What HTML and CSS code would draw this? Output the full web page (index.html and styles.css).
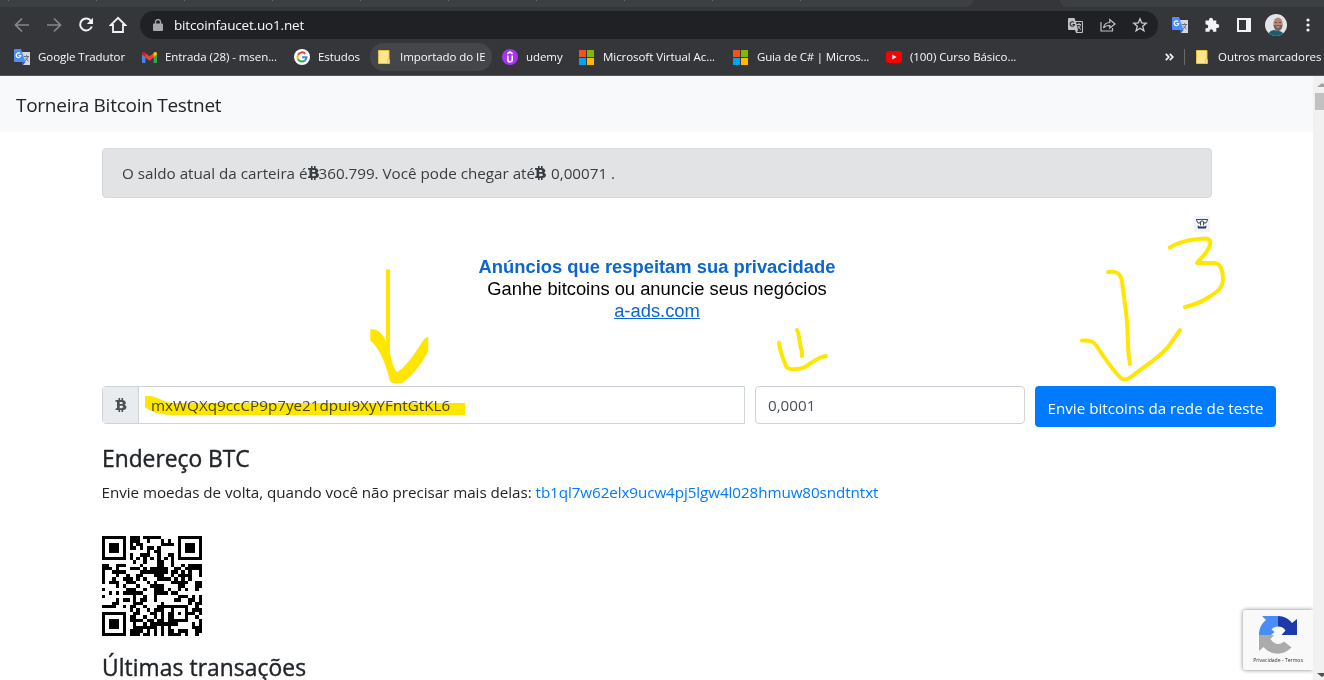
FILE: index.html
```html
<!DOCTYPE html>
<html lang="pt-BR">
<head>
<meta charset="utf-8">
<title>Torneira Bitcoin Testnet</title>
<link rel="stylesheet" href="styles.css">
</head>
<body>
<svg class="defs" width="0" height="0">
  <symbol id="btc" viewBox="0 0 11 14">
    <path fill="currentColor" fill-rule="evenodd" d="M0 2h3V0h1.6v2h1.4V0h1.6v2.2C9.400 2.500 10.300 3.500 10.300 4.800c0 .9-.5 1.600-1.400 2 1.300.4 2 1.200 2 2.400 0 1.600-1.200 2.600-3.300 2.800v2H6v-2H4.600v2H3v-2H0l.3-1.700h1.200V3.700H0zM4.200 3.900v2.200h1.500c1 0 1.600-.4 1.600-1.100s-.6-1.100-1.600-1.100zM4.200 7.800v2.400h1.800c1.100 0 1.800-.4 1.800-1.200s-.7-1.200-1.800-1.200z"/>
  </symbol>
  <symbol id="translate" viewBox="0 0 16 16">
    <path fill="#d5d8dc" d="M7 3h9v13H9z"/>
    <path fill="#4f8df5" d="M1 0h6l4.500 13H1a1 1 0 0 1-1-1V1a1 1 0 0 1 1-1z"/>
    <path fill="#2563c9" d="M7.500 13h4L9 16z"/>
    <path fill="none" stroke="#fff" stroke-width="1.200" d="M6.200 4.700a2.300 2.300 0 1 0 .6 1.800H4.600"/>
    <path fill="none" stroke="#697078" d="M10 7.500h5M12.500 6.200v1.300M14 7.500c-.4 2-1.700 3.500-3 4.300M11.500 8.800c.6 1.400 1.600 2.400 3 3.200"/>
  </symbol>
  <symbol id="folder" viewBox="0 0 14 14">
    <path fill="#ffe691" stroke="#e9c13d" d="M.5.500h10.500v13H.5z"/><path fill="#ffe691" stroke="#e9c13d" stroke-width=".8" d="M9.500 9.500h2v4H9.500z"/>
  </symbol>
  <symbol id="windows" viewBox="0 0 15 15">
    <path fill="#f4511e" d="M0 0h7v7H0z"/><path fill="#7fba00" d="M8 0h7v7H8z"/><path fill="#00a4ef" d="M0 8h7v7H0z"/><path fill="#ffb900" d="M8 8h7v7H8z"/>
  </symbol>
</svg>

<header class="browser">
  <div class="tabstrip"><div class="tabs-left"><i></i><i></i><i></i><i></i><i></i><i></i><i></i><i></i><i></i><i></i></div><div class="tabs-right"></div></div>
  <div class="toolbar">
    <svg class="nav-icon" width="16" height="16" viewBox="0 0 16 16" fill="none" stroke="#85878a" stroke-width="1.700"><path d="M15 8H2M8 1.500L1.500 8 8 14.500"/></svg>
    <svg class="nav-icon" width="16" height="16" viewBox="0 0 16 16" fill="none" stroke="#85878a" stroke-width="1.700"><path d="M1 8h13M8 1.500L14.500 8 8 14.500"/></svg>
    <svg class="nav-icon" width="16" height="16" viewBox="0 0 16 16" fill="none" stroke="#f1f3f4" stroke-width="2"><path d="M13 4A6 6 0 1 0 13.800 9.500"/><path fill="#f1f3f4" stroke="none" d="M15 .8V7H8.800z"/></svg>
    <svg class="nav-icon" width="18" height="18" viewBox="0 0 18 18" fill="none" stroke="#f1f3f4" stroke-width="1.800"><path d="M9 1.800L1.800 9H4v7h10V9h2.200z"/></svg>
    <div class="omnibox">
      <svg width="10" height="13" viewBox="0 0 10 13"><path fill="#a4a9ae" d="M1 4.500h8a1 1 0 0 1 1 1V11a1 1 0 0 1-1 1H1a1 1 0 0 1-1-1V5.500a1 1 0 0 1 1-1z"/><path fill="none" stroke="#a4a9ae" stroke-width="1.300" d="M2.500 5V3a2.500 2.500 0 0 1 5 0v2"/></svg>
      <span class="url">bitcoinfaucet.uo1.net</span>
      <span class="omni-actions">
        <svg width="15" height="15" viewBox="0 0 15 15"><path fill="#bfc2c5" d="M1 0h5.500l1 3H14a1 1 0 0 1 1 1v10a1 1 0 0 1-1 1H8l-1-3H1a1 1 0 0 1-1-1V1a1 1 0 0 1 1-1z"/><path fill="#292b2e" d="M8 4h6v10H9l1-2z"/><path fill="none" stroke="#292b2e" stroke-width="1.100" d="M6 4.500A2.200 2.200 0 1 0 6.500 6.500H4.500"/><path fill="none" stroke="#bfc2c5" d="M8.500 6.500H13M11 5v1.500M12.500 6.500c-.3 2-1.500 3-2.500 4M10 8c.5 1.500 1.500 2.500 3 3.500"/></svg>
        <svg width="16" height="14" viewBox="0 0 16 14" fill="none" stroke="#bfc2c5" stroke-width="1.200"><path d="M1 4v9h11.500v-3"/><path d="M3.500 10C4 6.500 6 4.600 9.800 4.500V1.500L15 6l-5.200 4V7.500C7 7.400 5 8 3.500 10z"/></svg>
        <svg width="16" height="16" viewBox="0 0 16 16" fill="none" stroke="#c9cccf" stroke-width="1.300"><path d="M8 1.800l1.700 4.200 4.500.3-3.500 2.900 1.200 4.500L8 11.200l-3.900 2.500 1.200-4.500-3.500-2.900 4.500-.3z"/></svg>
      </span>
    </div>
    <div class="extensions">
      <svg width="16" height="16"><use href="#translate"/></svg>
      <svg width="16" height="16" viewBox="0 0 16 16"><path fill="#f1f3f4" d="M1.500 3.500H5V2.700a2 2 0 0 1 4 0v.8h3.300v3.600h1a2 2 0 0 1 0 4h-1v3.700H9V14a1.700 1.700 0 0 0-3.500 0v.8H1.500v-3.500h.8a1.900 1.900 0 0 0 0-3.800h-.8z"/></svg>
      <svg width="14" height="14" viewBox="0 0 14 14"><path fill="#f1f3f4" fill-rule="evenodd" d="M0 0h14v14H0zM2 2v10h7V2z"/></svg>
      <svg width="22" height="22" viewBox="0 0 22 22"><clipPath id="av"><circle cx="11" cy="11" r="11"/></clipPath><g clip-path="url(#av)"><path fill="#e3e4e6" d="M0 0h22v22H0z"/><path fill="#17606d" d="M3 22c0-4 3-5.500 6-6l5 1c3 .5 4.500 2 5 5z"/><ellipse cx="13" cy="9.500" rx="4.600" ry="6" fill="#b98473"/><path fill="#71605c" d="M8.500 10.500c1 1.200 2 .8 4.500.6 2 .2 3 .6 4.500-.6 0 4-2 6.500-4.500 6.500s-4.500-3-4.500-6.500z"/><path stroke="#6a4941" d="M10 8.500h2M14 8.500h2"/><path stroke="#d9b9af" d="M11.500 13h3"/></g></svg>
      <svg width="4" height="14" viewBox="0 0 4 14" fill="#f1f3f4"><circle cx="2" cy="2" r="1.600"/><circle cx="2" cy="7" r="1.600"/><circle cx="2" cy="12" r="1.600"/></svg>
    </div>
  </div>
  <div class="bookmarks">
    <span class="bm"><svg width="16" height="16"><use href="#translate"/></svg><b class="t1">Google Tradutor</b></span>
    <span class="bm"><svg width="15" height="11" viewBox="0 0 15 11"><path fill="#4285f4" d="M0 1.500L3.400 4v7H1a1 1 0 0 1-1-1z"/><path fill="#34a853" d="M15 1.500L11.600 4v7H14a1 1 0 0 0 1-1z"/><path fill="#ea4335" d="M2.500.500l5 3.800 5-3.800v4.500l-5 3.700-5-3.700z"/><path fill="#c5221f" d="M0 1.700C0 0 1.800-.5 3.400.800V5L0 2.600z"/><path fill="#fbbc04" d="M15 1.700C15 0 13.200-.5 11.600.800V5L15 2.600z"/></svg><b class="t2">Entrada (28) - msen...</b></span>
    <span class="bm"><svg width="16" height="16" viewBox="0 0 16 16" fill="none" stroke-width="2"><circle cx="8" cy="8" r="8" fill="#fff"/><path stroke="#ea4335" d="M4 5.800A4.500 4.500 0 0 1 11.300 4.800"/><path stroke="#fbbc05" d="M4.100 5.700a4.600 4.600 0 0 0 0 4.600"/><path stroke="#34a853" d="M4 10.200a4.500 4.500 0 0 0 6.800 1.300"/><path stroke="#4285f4" d="M10.700 11.600A4.500 4.500 0 0 0 12.500 8.200H8"/></svg><b class="t3">Estudos</b></span>
    <span class="bm pill"><svg width="14" height="14"><use href="#folder"/></svg><b class="t4">Importado do IE</b></span>
    <span class="bm"><svg width="16" height="16" viewBox="0 0 16 16"><circle cx="8" cy="8" r="8" fill="#a435f0"/><path fill="none" stroke="#fff" stroke-width="1.600" d="M5.800 6.500v4.200c0 2.800 4.400 2.800 4.400 0V6.500M5.300 4.800L8 3l2.700 1.800"/></svg><b class="t5">udemy</b></span>
    <span class="bm"><svg width="15" height="15"><use href="#windows"/></svg><b class="t6">Microsoft Virtual Ac...</b></span>
    <span class="bm"><svg width="15" height="15"><use href="#windows"/></svg><b class="t7">Guia de C# | Micros...</b></span>
    <span class="bm"><svg width="16" height="12" viewBox="0 0 16 12"><rect width="16" height="12" rx="3" fill="#f00"/><path fill="#fff" d="M6.300 3.500v5L10.500 6z"/></svg><b class="t8">(100) Curso Básico...</b></span>
    <svg class="more" width="9" height="8" viewBox="0 0 9 8" fill="none" stroke="#f1f3f4" stroke-width="1.700"><path d="M.8.800L3.800 4 .8 7.200M4.800.800L7.800 4 4.800 7.200"/></svg>
    <i class="sep"></i>
    <span class="bm"><svg width="14" height="14"><use href="#folder"/></svg><b class="t9">Outros marcadores</b></span>
  </div>
</header>

<div class="viewport">
  <main class="page">
    <nav class="navbar"><span class="brand">Torneira Bitcoin Testnet</span></nav>
    <div class="content">
      <div class="alert"><span class="a1">O saldo atual da carteira é</span><svg class="btc" width="11" height="14"><use href="#btc"/></svg><span class="a2">360.799. Você pode chegar até</span><svg class="btc" width="11" height="14"><use href="#btc"/></svg><span class="a3">0,00071 .</span></div>
      <section class="ad">
        <svg class="ad-mark" width="16" height="16" viewBox="0 0 16 16"><path fill="#f0f3f6" d="M0 0h16v16H0z"/><path fill="none" stroke="#2d3b49" stroke-width=".9" d="M2 3.500h12M2.500 4l1.500 3h2l1-2h2l1 2h2l1.500-3M6.500 6v3.500M9.500 6v3.500"/><path fill="#2d3b49" d="M3.500 9.500l2 1h5l2-1-.5 3H4z"/></svg>
        <p class="ad-title">Anúncios que respeitam sua privacidade</p>
        <p class="ad-text">Ganhe bitcoins ou anuncie seus negócios</p>
        <a class="ad-link">a-ads.com</a>
      </section>
      <form class="send">
        <div class="address"><span class="addon"><svg width="12" height="14"><use href="#btc"/></svg></span><span class="field"><span class="f1">mxWQXq9ccCP9p7ye21dpui9XyYFntGtKL6</span></span></div>
        <div class="amount"><span class="f2">0,0001</span></div>
        <div class="submit"><span class="f3">Envie bitcoins da rede de teste</span></div>
      </form>
      <h4 class="h-btc"><span class="h1">Endereço BTC</span></h4>
      <p class="back"><span class="p1">Envie moedas de volta, quando você não precisar mais delas:</span> <a class="p2">tb1ql7w62elx9ucw4pj5lgw4l028hmuw80sndtntxt</a></p>
      <svg id="qr" class="qr" width="100" height="100" viewBox="0 0 29 29" shape-rendering="crispEdges"></svg>
      <h4 class="h-tx"><span class="h2">Últimas transações</span></h4>
    </div>
    <aside class="captcha">
      <svg width="38" height="38" viewBox="0 0 38 38"><path fill="#4b8df8" d="M0 19C0 12 3 7 7 4L3 0h16v10.500c-3 0-5 1-6.500 3l3 2.500-3.500 3z"/><path fill="#1c3aa9" d="M19 0c6 0 11 3 14 7l5-4v16H22.500l4-4.500c-1.500-2.500-4-4-7.500-4z"/><path fill="#ababab" d="M0 19h15l-3.500 4c4 6.500 10 6 13.500 2.500l7.500 6C23 41 11 38.500 4.500 31L0 35z"/></svg>
      <span>Privacidade - Termos</span>
    </aside>
  </main>
  <div class="scrollbar"><i class="up"></i><i class="thumb"></i><i class="down"></i></div>
</div>

<svg class="ink" width="1324" height="680" viewBox="0 0 1324 680" fill="none" stroke="#ffe600" stroke-width="4" stroke-linecap="round" stroke-linejoin="round">
  <path stroke-linecap="butt" d="M388 269.500V354"/>
  <path fill="#ffe600" stroke="none" d="M370.300 329.500C378 328 384 335 386.500 343C391 352 392 368 397 372C404 369 415 354 424 339L428.300 336.500V351C420 367 410 378 402 383C397 384 392 384 390 381C387 367 379 346 370.300 341z"/>
  <path fill="#ffe600" stroke="none" d="M145 396.500C155 394 162 402 172 403H465V415H172C158 415 150 411 145 407z"/>
  <path d="M779 342.500C780 353 784 360 786.500 367C789 370 799 370 805 367C812 363 817 357 826 356"/>
  <path d="M797 330C799.500 334 799 341 801 348C802 351 802 353 802 356"/>
  <path d="M1108 272C1117 271 1120 273 1122 281C1124 299 1127 315 1127.500 329C1128 341 1127.500 351 1130 364"/>
  <path d="M1082 340.500C1090 340 1093 340.500 1098 348C1104 357 1113 371 1121 378C1124 380.500 1127 380 1131 377C1143 367 1158 359 1168 347C1172 342 1177 334 1180 330"/>
  <path d="M1170 247.500C1181 240 1195 239 1206 238.500C1213 239 1210 247 1207 251C1204 256 1200 259 1197 263H1214C1221 263 1223 272 1223 279C1223 288 1217 292 1209 297C1200 303 1194 305 1185 307"/>
</svg>
<script src="qr.js"></script>
</body>
</html>
```

FILE: styles.css
```css
* { box-sizing: border-box; }
body { margin: 0; width: 1324px; height: 680px; overflow: hidden; position: relative; background: #fff; color: #212529; font-family: "Open Sans", "Noto Sans", sans-serif; font-size: 15.200px; }
p, h4 { margin: 0; }
i { display: block; }
svg { flex: none; display: block; }
.defs { position: absolute; }
span[class], b[class] { white-space: nowrap; }

.browser { height: 76px; background: #35363a; border-bottom: 1px solid #55565a; }
.tabstrip { height: 7px; display: flex; justify-content: space-between; }
.tabs-left { width: 973px; background: #3c4043; border-bottom-right-radius: 7px; display: flex; gap: 87px; padding-left: 8px; }
.tabs-left i { width: 1px; height: 1px; background: #6a6d70; }
.tabs-right { width: 264px; background: #3c4043; border-bottom-left-radius: 7px; }
.toolbar { height: 36px; display: flex; align-items: center; padding-left: 14px; }
.nav-icon { margin-right: 16px; }
.nav-icon:nth-child(4) { margin: 0 13px 0 -1px; }
.omnibox { width: 1018px; height: 28px; border-radius: 14px; background: #202124; display: flex; align-items: center; padding: 0 10px 0 13px; }
.url { margin-left: 11px; color: #f8f9fa; font-size: 13.500px; letter-spacing: -.18px; }
.omni-actions { margin-left: auto; display: flex; align-items: center; gap: 16.500px; }
.extensions { display: flex; align-items: center; margin-left: 14px; gap: 16px; }
.extensions svg:nth-child(3) { margin-left: 1px; }
.extensions svg:nth-child(4) { margin-left: -2px; }
.extensions svg:nth-child(5) { margin-left: 3px; }
.bookmarks { height: 28px; padding-left: 14px; display: grid; grid-template-columns: 128px 152px 76px 132px 77px 154px 153px 279px 19px 12px 127px; align-items: center; }
.bm { display: flex; align-items: center; gap: 8px; height: 28px; color: #f8f9fa; }
.bm:nth-child(6), .bm:nth-child(7) { gap: 9px; }
.bm b { font-weight: 400; font-size: 11.500px; margin-top: -1px; letter-spacing: -.06px; }
.bm .t7 { letter-spacing: -.18px; }
.pill { width: 122px; border-radius: 14px; background: #45464a; padding-left: 8px; }
.sep { width: 1px; height: 16px; background: #6a6c70; }

.viewport { display: flex; height: 604px; }
.page { width: 1313px; position: relative; }
.scrollbar { width: 11px; background: #f1f1f1; display: flex; flex-direction: column; overflow: hidden; }
.scrollbar .up { border: 5px solid transparent; border-top: 0; border-bottom: 4px solid #a3a3a3; margin: 7px 0 6px 4px; width: 10px; }
.scrollbar .thumb { height: 17px; margin-left: 2px; background: #c1c1c1; }
.scrollbar .down { border: 5px solid transparent; border-bottom: 0; border-top: 4px solid #505050; margin: auto 0 3px 4px; width: 10px; }

.navbar { height: 56px; background: #f8f9fa; padding: 2px 0 0 16px; display: flex; align-items: center; }
.brand { font-size: 19px; letter-spacing: -.27px; }
.content { padding: 16px 0 0 102px; }
.alert { width: 1110px; height: 50px; border: 1px solid #d6d8db; border-radius: 4px; background: #e2e3e5; color: #383d41; display: flex; align-items: center; padding-left: 19px; }
.a3 { margin-left: 5px; }
.ad { width: 1110px; height: 172px; margin-top: 16px; display: flex; flex-direction: column; align-items: center; font-family: "Liberation Sans", Arial, sans-serif; font-size: 18.350px; line-height: 22px; color: #000; }
.ad-mark { align-self: flex-end; margin: 2px 2px 24px 0; }
.ad-title { color: #0b66cf; font-weight: 700; }
.ad-link { color: #0b66cf; text-decoration: underline; }
.send { display: flex; gap: 10px; align-items: flex-start; }
.address { width: 643px; height: 38px; border: 1px solid #ced4da; border-radius: 4px 0 0 4px; display: flex; }
.addon { width: 36px; background: #e9ecef; border-right: 1px solid #ced4da; display: flex; align-items: center; justify-content: center; color: #495057; }
.field { display: flex; align-items: center; padding-left: 12px; color: #495057; }
.f1 { letter-spacing: .03px; }
.amount { width: 270px; height: 38px; border: 1px solid #ced4da; border-radius: 4px; padding-left: 12px; display: flex; align-items: center; color: #495057; }
.submit { width: 241px; height: 41px; border-radius: 4px; background: #007bff; color: #fff; display: flex; align-items: center; justify-content: center; padding-top: 3px; }
.h-btc, .h-tx { font-size: 22.800px; font-weight: 400; line-height: 29px; -webkit-text-stroke: .4px currentColor; }
.h-btc { margin-top: 17px; }
.back { line-height: 24px; margin: 7px 0 0 -.5px; white-space: nowrap; letter-spacing: -.035px; }
.p2 { color: #007bff; letter-spacing: -.07px; }
.qr { margin-top: 32px; }
.h-tx { margin-top: 17px; letter-spacing: .08px; }
.captcha { position: absolute; right: 0; top: 534px; width: 70px; height: 60px; border-radius: 3px 0 0 3px; background: #f9f9f9; box-shadow: 0 0 4px #808080; clip-path: inset(-6px 0 -6px -6px); display: flex; flex-direction: column; align-items: center; padding-top: 6px; }
.captcha span { font-size: 5.100px; line-height: 8px; margin-top: 2px; color: #333; white-space: nowrap; }
.ink { position: absolute; left: 0; top: 0; mix-blend-mode: multiply; }
```

FILE: qr.js
```js
// QR encoder, version 3 (29x29), byte mode, single error-correction block.
function buildQR(text, level, mask) {
  const N = 29, total = 70, dataLen = level === "L" ? 55 : 44, ecLen = total - dataLen;
  let bits = "0100" + text.length.toString(2).padStart(8, "0");
  for (const c of text) bits += c.charCodeAt(0).toString(2).padStart(8, "0");
  bits += "0000".slice(0, dataLen * 8 - bits.length);
  while (bits.length % 8) bits += "0";
  const data = bits.match(/.{8}/g).map(b => parseInt(b, 2));
  for (let i = 0; data.length < dataLen; i++) data.push(i % 2 ? 17 : 236);

  const mul = (a, b) => { let r = 0; for (; b; b >>= 1) { if (b & 1) r ^= a; a = a & 128 ? (a << 1) ^ 285 : a << 1; } return r; };
  let gen = [1], root = 1;
  for (let i = 0; i < ecLen; i++) {
    const next = new Array(gen.length + 1).fill(0);
    gen.forEach((g, j) => { next[j] ^= g; next[j + 1] ^= mul(g, root); });
    gen = next; root = mul(root, 2);
  }
  const rem = data.concat(new Array(ecLen).fill(0));
  for (let i = 0; i < dataLen; i++) {
    const k = rem[i];
    gen.forEach((g, j) => { rem[i + j] ^= mul(g, k); });
  }
  const stream = data.concat(rem.slice(dataLen)).map(v => v.toString(2).padStart(8, "0")).join("") + "0000000";

  const m = Array.from({ length: N }, () => new Array(N).fill(null));
  const finder = (r0, c0) => {
    for (let r = -1; r < 8; r++) for (let c = -1; c < 8; c++) {
      if (r0 + r < 0 || r0 + r >= N || c0 + c < 0 || c0 + c >= N) continue;
      const d = Math.max(Math.abs(r - 3), Math.abs(c - 3));
      m[r0 + r][c0 + c] = d !== 2 && d < 4 ? 1 : 0;
    }
  };
  finder(0, 0); finder(0, N - 7); finder(N - 7, 0);
  for (let r = -2; r < 3; r++) for (let c = -2; c < 3; c++) m[22 + r][22 + c] = Math.max(Math.abs(r), Math.abs(c)) === 1 ? 0 : 1;
  for (let i = 8; i < N - 8; i++) m[6][i] = m[i][6] = 1 - i % 2;

  const f = ((level === "L" ? 1 : 0) << 3) | mask;
  let d = f << 10;
  for (let i = 14; i >= 10; i--) if (d >> i & 1) d ^= 0x537 << (i - 10);
  const fmt = ((f << 10) | d) ^ 0x5412;
  for (let i = 0; i < 15; i++) {
    const b = fmt >> i & 1;
    m[i < 6 ? i : i < 8 ? i + 1 : N - 15 + i][8] = b;
    m[8][i < 8 ? N - 1 - i : i === 8 ? 7 : 14 - i] = b;
  }
  m[N - 8][8] = 1;

  const masks = [(r, c) => (r + c) % 2, r => r % 2, (r, c) => c % 3, (r, c) => (r + c) % 3,
    (r, c) => ((r >> 1) + Math.floor(c / 3)) % 2, (r, c) => r * c % 2 + r * c % 3,
    (r, c) => (r * c % 2 + r * c % 3) % 2, (r, c) => (r * c % 3 + (r + c) % 2) % 2];
  let k = 0, up = true;
  for (let c = N - 1; c > 0; c -= 2) {
    if (c === 6) c--;
    for (let i = 0; i < N; i++) for (let j = 0; j < 2; j++) {
      const r = up ? N - 1 - i : i;
      if (m[r][c - j] === null) m[r][c - j] = +stream[k++] ^ (masks[mask](r, c - j) === 0 ? 1 : 0);
    }
    up = !up;
  }
  return m;
}

const address = document.querySelector(".p2").textContent;
let path = "";
buildQR(address, "L", 4).forEach((row, r) => row.forEach((v, c) => { if (v) path += `M${c} ${r}h1v1h-1z`; }));
document.getElementById("qr").innerHTML = `<path d="${path}"/>`;
```
